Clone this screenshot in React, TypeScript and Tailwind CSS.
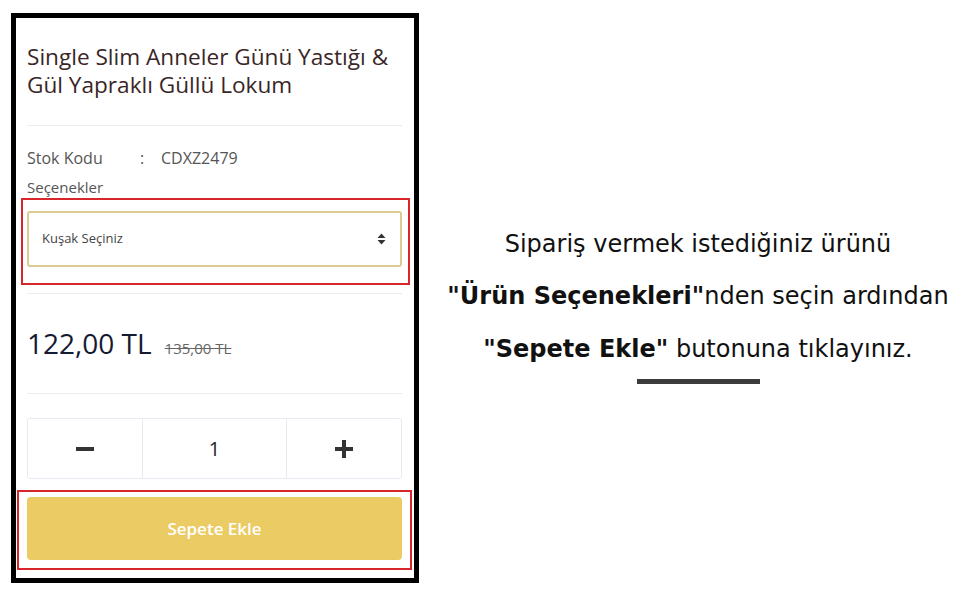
const leftFont = { fontFamily: '"Open Sans", "Noto Sans", sans-serif' };
const rightFont = { fontFamily: '"DejaVu Sans", "Noto Sans", sans-serif' };

function SortArrows() {
  return (
    <svg width="9" height="12" viewBox="0 0 9 12" className="text-[#333]">
      <path d="M4.5 0.5 L8.5 5 H0.5 Z" fill="currentColor" />
      <path d="M4.5 11.5 L8.5 7 H0.5 Z" fill="currentColor" />
    </svg>
  );
}

function ProductCard() {
  return (
    <div
      className="ml-[11px] mt-[13px] flex h-[570px] w-[408px] shrink-0 flex-col border-[5px] border-black bg-white pl-[11px] pr-[12px]"
      style={leftFont}
    >
      <h1 className="whitespace-nowrap pt-[25px] text-[22.6px] leading-[28px] text-[#3a2626]">
        Single Slim Anneler Günü Yastığı &amp;
        <br />
        Gül Yapraklı Güllü Lokum
      </h1>

      <div className="mt-[26px] h-px bg-[#ececec]" />

      <div className="mt-[21px] flex text-[16px] leading-[22px] text-[#555]">
        <span className="w-[113px]">Stok Kodu</span>
        <span className="w-[21px]">:</span>
        <span>CDXZ2479</span>
      </div>
      <div className="mt-[7px] text-[15px] leading-[22px] text-[#555]">Seçenekler</div>

      <div className="ml-[-6px] mr-[-8px] border-2 border-[#d9262b] pb-[16px] pl-[4px] pr-[6px] pt-[11px]">
        <div className="flex h-[56px] items-center justify-between rounded-[3px] border-2 border-[#dccb92] pl-[13px] pr-[14px]">
          <span className="text-[13px] text-[#444]">Kuşak Seçiniz</span>
          <SortArrows />
        </div>
      </div>

      <div className="mt-[8px] h-px bg-[#ececec]" />

      <div className="mt-[31px] flex items-baseline gap-[13px]">
        <span className="text-[28px] leading-[36px] text-[#151a33]">122,00 TL</span>
        <span className="text-[15px] text-[#666] line-through">135,00 TL</span>
      </div>

      <div className="mt-[32px] h-px bg-[#ececec]" />

      <div className="mt-[24px] flex h-[61px] rounded-[3px] border border-[#e6ebf1]">
        <button className="flex w-[115px] items-center justify-center border-r border-[#e6ebf1]">
          <span className="block h-[4px] w-[18px] bg-[#333]" />
        </button>
        <div className="flex flex-1 items-center justify-center border-r border-[#e6ebf1] text-[20px] text-[#222]">
          1
        </div>
        <button className="flex w-[114px] items-center justify-center">
          <span className="relative block h-[18px] w-[18px]">
            <span className="absolute left-0 top-[7px] h-[4px] w-[18px] bg-[#333]" />
            <span className="absolute left-[7px] top-0 h-[18px] w-[4px] bg-[#333]" />
          </span>
        </button>
      </div>

      <div className="ml-[-10px] mr-[-10px] mt-[11px] border-2 border-[#d9262b] pb-[8px] pl-[8px] pr-[8px] pt-[5px]">
        <button className="flex h-[63px] w-full items-center justify-center rounded-[4px] bg-[#ebcb63] text-[17px] font-semibold text-white">
          Sepete Ekle
        </button>
      </div>
    </div>
  );
}

export default function App() {
  return (
    <div className="flex h-[594px] w-[960px] overflow-hidden bg-white">
      <ProductCard />
      <div
        className="flex flex-1 flex-col items-center pl-[17px] pt-[226px] text-[24px] text-[#111]"
        style={rightFont}
      >
        <p className="whitespace-nowrap leading-[36px]">Sipariş vermek istediğiniz ürünü</p>
        <p className="mt-[16px] whitespace-nowrap leading-[36px]">
          <b>"Ürün Seçenekleri"</b>nden seçin ardından
        </p>
        <p className="mt-[17px] whitespace-nowrap leading-[36px]">
          <b>"Sepete Ekle"</b> butonuna tıklayınız.
        </p>
        <div className="mt-[12px] h-[5px] w-[123px] bg-[#3b3b3b]" />
      </div>
    </div>
  );
}
